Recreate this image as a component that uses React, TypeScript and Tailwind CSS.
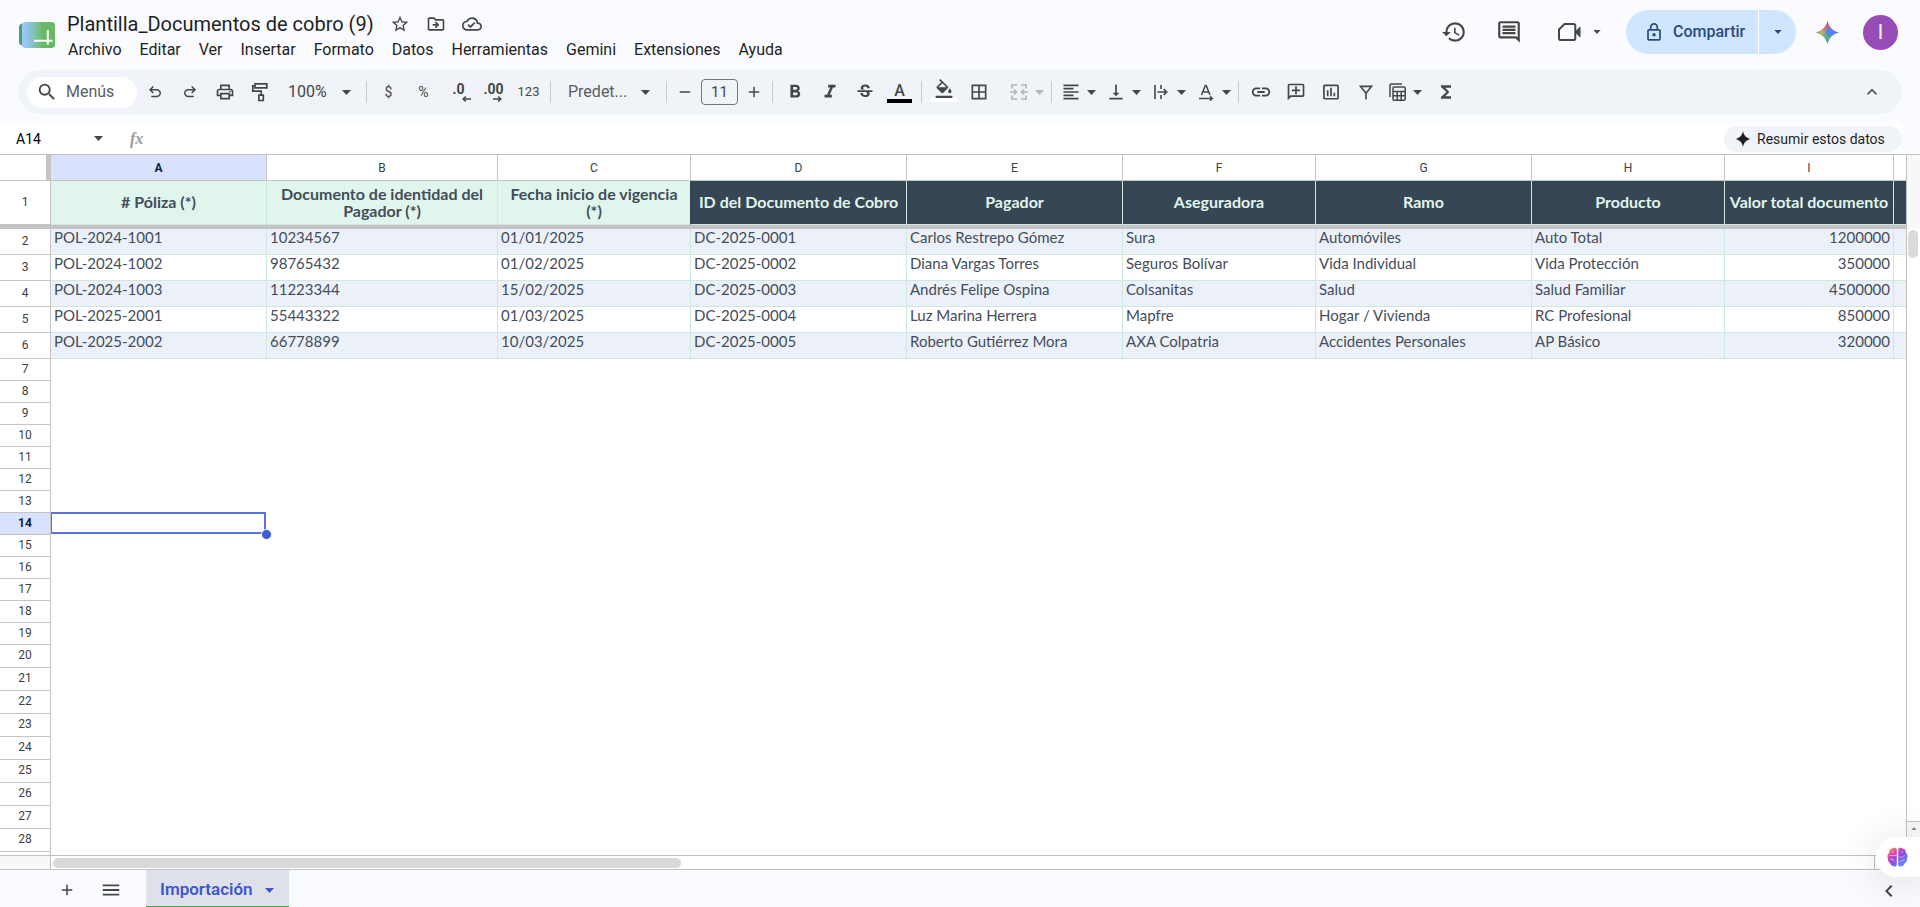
import React from "react";
import {
  MdStarBorder,
  MdOutlineDriveFileMove,
  MdOutlineCloudDone,
  MdSearch,
  MdOutlinePrint,
  MdFormatBold,
  MdFormatItalic,
  MdStrikethroughS,
  MdFormatColorFill,
  MdBorderAll,
  MdFormatAlignLeft,
  MdVerticalAlignBottom,
  MdLink,
  MdOutlineAddComment,
  MdInsertChartOutlined,
  MdFunctions,
  MdHistory,
  MdOutlineComment,
  MdKeyboardArrowUp,
  MdKeyboardArrowLeft,
  MdRemove,
  MdAdd,
  MdMenu,
} from "react-icons/md";

function Caret({ className = "h-[5px] w-[9px]" }: { className?: string }) {
  return (
    <svg className={`shrink-0 ${className}`} viewBox="0 0 9 5" fill="currentColor" aria-hidden="true">
      <path d="M0 0h9L4.5 5z" />
    </svg>
  );
}

function SheetLogo() {
  return (
    <svg className="h-[26px] w-[36px]" viewBox="0 0 36 26" aria-hidden="true">
      <defs>
        <linearGradient id="logoFill" x1="0" x2="1" y1="0" y2="0">
          <stop offset="0" stopColor="#9cc8fb" />
          <stop offset="0.15" stopColor="#94c5f0" />
          <stop offset="0.65" stopColor="#68b964" />
          <stop offset="1" stopColor="#68b964" />
        </linearGradient>
      </defs>
      <path d="M4 1.5h6v22H4a4 4 0 0 1-4-4v-14a4 4 0 0 1 4-4z" fill="#4f9f5e" />
      <rect x="3" y="0" width="33" height="26" rx="3.5" fill="url(#logoFill)" />
      <path d="M15 18.7h18.5M28.8 8v14.500" stroke="#fff" strokeWidth="2" fill="none" />
    </svg>
  );
}

function UndoIcon() {
  return (
    <svg className="size-[18px]" viewBox="0 -960 960 960" fill="currentColor" aria-hidden="true">
      <path d="M280-200v-80h284q63 0 109.500-40T720-420q0-60-46.500-100T564-560H312l104 104-56 56-200-200 200-200 56 56-104 104h252q97 0 166.500 63T800-420q0 94-69.500 157T564-200H280Z" />
    </svg>
  );
}

function RedoIcon() {
  return (
    <svg className="size-[18px]" viewBox="0 -960 960 960" fill="currentColor" aria-hidden="true">
      <path d="M396-200q-97 0-166.500-63T160-420q0-94 69.500-157T396-640h252L544-744l56-56 200 200-200 200-56-56 104-104H396q-63 0-109.500 40T240-420q0 60 46.500 100T396-280h284v80H396Z" />
    </svg>
  );
}

function PaintIcon() {
  return (
    <svg className="h-5 w-[18px]" viewBox="0 0 18 20" fill="none" stroke="currentColor" strokeWidth="1.700" aria-hidden="true">
      <path d="M4 1.900h11.800v4H4zM4 3.900H1.800v5.300h8.400v4M7.900 13.200h4.400v5.300H7.900z" />
    </svg>
  );
}

function DecimalIcon({ digits, direction }: { digits: string; direction: "left" | "right" }) {
  return (
    <span className="flex flex-col items-center text-sm leading-[13px] font-bold">
      <span>{digits}</span>
      <svg
        className={direction === "left" ? "h-[6px] w-[9px] self-end translate-x-[6px]" : "h-[6px] w-[9px] translate-x-[4px]"}
        viewBox="0 0 9 6"
        fill="none"
        stroke="currentColor"
        strokeWidth="1.500"
        aria-hidden="true"
      >
        {direction === "left" ? <path d="M9 3H1.200M3.800.5 1.200 3l2.600 2.500" /> : <path d="M0 3h7.800M5.200.5 7.800 3 5.200 5.500" />}
      </svg>
    </span>
  );
}

function MergeIcon() {
  return (
    <svg className="h-[18px] w-[18px]" viewBox="0 0 18 18" fill="none" stroke="currentColor" strokeWidth="1.700" aria-hidden="true">
      <path d="M7 2H2v3.500M7 16H2v-3.500M11 2h5v3.500M11 16h5v-3.500M0 9h6.200M4 6.500 6.500 9 4 11.500M18 9h-6.200M14 6.500 11.500 9l2.500 2.500" />
    </svg>
  );
}

function WrapIcon() {
  return (
    <svg className="h-4 w-[14px]" viewBox="0 0 14 16" fill="none" stroke="currentColor" strokeWidth="1.600" aria-hidden="true">
      <path d="M1 1v14M7 1v4M7 11v4M3.500 8h9M9.700 5l3 3-3 3" />
    </svg>
  );
}

function RotateTextIcon() {
  return (
    <svg className="h-[17px] w-[15px]" viewBox="0 0 15 17" fill="none" stroke="currentColor" strokeWidth="1.500" aria-hidden="true">
      <path d="M2.500 11 6.300 1.500h.9L11 11M3.800 8h6M0 14.500h13M11 12.300l2.300 2.200-2.300 2.200" />
    </svg>
  );
}

function FilterIcon() {
  return (
    <svg className="h-[15px] w-[14px]" viewBox="0 0 14 15" fill="none" stroke="currentColor" strokeWidth="1.600" aria-hidden="true">
      <path d="M1.500 1.400h11L7 8.200zM7 7.500v7" />
    </svg>
  );
}

function TableViewIcon() {
  return (
    <svg className="h-[18px] w-[17px]" viewBox="0 0 17 18" fill="none" stroke="currentColor" strokeWidth="1.500" aria-hidden="true">
      <path d="M13 1H2.500A1.500 1.500 0 0 0 1 2.500V14" />
      <rect x="4" y="4" width="12.200" height="13.200" rx="1.200" />
      <path d="M4 8.500h12M4 12.800h12M8.200 8.500V17M12.200 8.500V17" />
    </svg>
  );
}

function VideoIcon() {
  return (
    <svg className="h-[18px] w-[23px]" viewBox="0 0 23 18" aria-hidden="true">
      <path d="M6.500 1h9A1.800 1.800 0 0 1 17.300 2.800v12.400a1.800 1.800 0 0 1-1.800 1.800H2.800A1.800 1.800 0 0 1 1 15.200V6.500z" fill="none" stroke="currentColor" strokeWidth="2" />
      <path d="M17.500 8 22.500 3.200v11.600L17.500 10z" fill="currentColor" />
    </svg>
  );
}

function LockIcon() {
  return (
    <svg className="h-[18px] w-[14px]" viewBox="0 0 14 18" aria-hidden="true">
      <rect x="1" y="6.800" width="12" height="10" rx="1" fill="none" stroke="currentColor" strokeWidth="1.700" />
      <path d="M3.700 6.500V4.200a3.300 3.300 0 0 1 6.600 0v2.300" fill="none" stroke="currentColor" strokeWidth="1.700" />
      <circle cx="7" cy="11.700" r="1.700" fill="currentColor" />
    </svg>
  );
}

function GeminiIcon() {
  const star = "M11 0c1.400 6 5 9.600 11 11-6 1.400-9.600 5-11 11-1.400-6-5-9.600-11-11C6 9.600 9.600 6 11 0z";
  return (
    <svg className="size-[23px]" viewBox="0 0 22 22" aria-hidden="true">
      <defs>
        <linearGradient id="gemYellow" x1="0" y1="0.5" x2="0.5" y2="0.5">
          <stop offset="0" stopColor="#f2c233" />
          <stop offset="0.5" stopColor="#dcc04c" />
          <stop offset="1" stopColor="#dcc04c" stopOpacity="0" />
        </linearGradient>
        <linearGradient id="gemRed" x1="0.45" y1="0" x2="0.58" y2="0.42">
          <stop offset="0" stopColor="#e5483f" />
          <stop offset="0.45" stopColor="#d9625f" />
          <stop offset="1" stopColor="#d9625f" stopOpacity="0" />
        </linearGradient>
        <linearGradient id="gemGreen" x1="0.45" y1="1" x2="0.58" y2="0.55">
          <stop offset="0" stopColor="#46a85c" />
          <stop offset="0.5" stopColor="#5cb46c" />
          <stop offset="1" stopColor="#5cb46c" stopOpacity="0" />
        </linearGradient>
      </defs>
      <path d={star} fill="#4f82f4" />
      <path d={star} fill="url(#gemYellow)" />
      <path d={star} fill="url(#gemRed)" />
      <path d={star} fill="url(#gemGreen)" />
    </svg>
  );
}

function BrainIcon() {
  return (
    <svg className="h-[20px] w-[21px]" viewBox="0 0 21 20" aria-hidden="true">
      <defs>
        <linearGradient id="brainFill" x1="0.1" y1="0" x2="0.9" y2="1">
          <stop offset="0" stopColor="#f59a2c" />
          <stop offset="0.28" stopColor="#d946b8" />
          <stop offset="0.55" stopColor="#8b4fe0" />
          <stop offset="1" stopColor="#4fa8fb" />
        </linearGradient>
      </defs>
      <path
        d="M9.800 2.200C9.300.3 6 .1 5 1.800 2.800 2 1.800 4 2.300 5.800.4 7-.1 9.800 1 11.500.6 14 2 15.800 3.200 16.300 3.600 19.300 8.500 21 9.800 18zM11.200 2.200C11.700.3 15 .1 16 1.800c2.200.2 3.200 2.200 2.700 4 1.900 1.200 2.400 4 1.300 5.700.4 2.500-1 4.300-2.200 4.800-.4 3-5.300 4.700-6.600 1.700z"
        fill="url(#brainFill)"
      />
      <path
        d="M2.500 8.500h7M3 12.500h3l1.500 2M5 4l2 1.500M18 8l-3 2.500-3-1M17.500 13l-3.500.5-1.500 2M16 4.500l-2 1.500"
        fill="none"
        stroke="#fff"
        strokeOpacity="0.500"
        strokeWidth="0.900"
      />
    </svg>
  );
}

function ToolButton({ label, children, className = "w-[35px]" }: { label: string; children: React.ReactNode; className?: string }) {
  return (
    <button type="button" aria-label={label} className={`flex h-8 shrink-0 items-center justify-center ${className}`}>
      {children}
    </button>
  );
}

function ToolMenu({ label, children, className = "" }: { label: string; children: React.ReactNode; className?: string }) {
  return (
    <button type="button" aria-label={label} className={`flex h-8 w-10 shrink-0 items-center ${className}`}>
      <span className="flex w-6 justify-center">{children}</span>
      <span className="flex w-4 justify-center">
        <Caret />
      </span>
    </button>
  );
}

function Divider() {
  return <span className="mx-1 h-[22px] w-px shrink-0 bg-[#c7c9cc]" />;
}

const menus = ["Archivo", "Editar", "Ver", "Insertar", "Formato", "Datos", "Herramientas", "Gemini", "Extensiones", "Ayuda"];

function Header() {
  return (
    <header className="flex h-[70px] items-start pl-[19px] text-[#444746]">
      <div className="mt-[22px]">
        <SheetLogo />
      </div>
      <div className="ml-1">
        <div className="mt-2 flex h-8 items-center pl-2">
          <h1 className="text-xl text-[#1f1f1f]">Plantilla_Documentos de cobro (9)</h1>
          <div className="ml-4 flex items-center gap-4">
            <button type="button" aria-label="Destacar"><MdStarBorder className="size-5" /></button>
            <button type="button" aria-label="Mover"><MdOutlineDriveFileMove className="size-5" /></button>
            <button type="button" aria-label="Estado del documento"><MdOutlineCloudDone className="size-5" /></button>
          </div>
        </div>
        <nav className="flex h-5 items-center text-base leading-5 text-[#1f1f1f]">
          {menus.map((m) => (
            <button key={m} type="button" className="px-[9px]">{m}</button>
          ))}
        </nav>
      </div>
      <div className="ml-auto flex h-16 items-center pr-[22px]">
        <button type="button" aria-label="Historial de versiones"><MdHistory className="size-[26px]" /></button>
        <button type="button" aria-label="Comentarios" className="ml-[29px]"><MdOutlineComment className="size-[26px]" /></button>
        <button type="button" aria-label="Videollamada" className="ml-9 flex items-center gap-3">
          <VideoIcon />
          <Caret className="h-[4px] w-2" />
        </button>
        <div className="ml-[25px] flex h-11 overflow-hidden rounded-full bg-[#d0e5fe] font-medium text-[#2c4a7c]">
          <button type="button" className="flex w-[132px] items-center gap-3 pl-[21px] text-base">
            <LockIcon />
            Compartir
          </button>
          <button type="button" aria-label="Opciones para compartir" className="flex w-[38px] items-center justify-center border-l border-white">
            <Caret className="h-[4px] w-2" />
          </button>
        </div>
        <button type="button" aria-label="Gemini" className="ml-5"><GeminiIcon /></button>
        <button type="button" aria-label="Cuenta" className="ml-6 flex size-[35px] items-center justify-center rounded-full bg-[#974db5] text-xl text-white">I</button>
      </div>
    </header>
  );
}

function Toolbar() {
  return (
    <div role="toolbar" aria-label="Herramientas" className="mr-[18px] ml-[18px] flex h-11 items-center rounded-full bg-[#f0f3f8] pr-[13px] pl-[9px] text-[#444746]">
      <label className="flex h-[31px] w-[110px] shrink-0 items-center gap-2 rounded-full bg-white pl-[9px]">
        <MdSearch className="size-[22px] shrink-0" />
        <input aria-label="Menús" placeholder="Menús" className="w-[62px] bg-transparent text-base outline-none placeholder:text-[#5a5d60]" />
      </label>
      <div className="flex">
        <ToolButton label="Deshacer"><UndoIcon /></ToolButton>
        <ToolButton label="Rehacer"><RedoIcon /></ToolButton>
        <ToolButton label="Imprimir"><MdOutlinePrint className="size-5" /></ToolButton>
        <ToolButton label="Copiar formato"><PaintIcon /></ToolButton>
      </div>
      <span className="relative ml-1.5 flex w-[79px] shrink-0 items-center">
        <select aria-label="Zoom" className="w-full appearance-none bg-transparent pl-[5px] text-base outline-none">
          <option>100%</option>
        </select>
        <Caret className="pointer-events-none absolute right-[11px] h-[5px] w-[9px]" />
      </span>
      <Divider />
      <ToolButton label="Moneda" className="w-[35px] text-sm">$</ToolButton>
      <ToolButton label="Porcentaje" className="w-[35px] text-sm">%</ToolButton>
      <ToolButton label="Menos decimales"><DecimalIcon digits=".0" direction="left" /></ToolButton>
      <ToolButton label="Más decimales"><DecimalIcon digits=".00" direction="right" /></ToolButton>
      <ToolButton label="Más formatos" className="w-[35px] text-[13px]">123</ToolButton>
      <Divider />
      <span className="relative flex w-[107px] shrink-0 items-center">
        <select aria-label="Fuente" className="w-full appearance-none bg-transparent pl-[13px] text-base text-[#5a5d60] outline-none">
          <option>Predet...</option>
        </select>
        <Caret className="pointer-events-none absolute right-3 h-[5px] w-[9px]" />
      </span>
      <Divider />
      <ToolButton label="Reducir tamaño" className="mr-[2px] w-7"><MdRemove className="size-[18px]" /></ToolButton>
      <input aria-label="Tamaño de fuente" defaultValue="11" className="h-[26px] w-[37px] shrink-0 rounded border border-[#747775] bg-transparent text-center text-[15px] outline-none" />
      <ToolButton label="Aumentar tamaño" className="ml-[2px] w-7"><MdAdd className="size-[18px]" /></ToolButton>
      <Divider />
      <ToolButton label="Negrita"><MdFormatBold className="size-[22px]" /></ToolButton>
      <ToolButton label="Cursiva"><MdFormatItalic className="size-[22px]" /></ToolButton>
      <ToolButton label="Tachado"><MdStrikethroughS className="size-5" /></ToolButton>
      <ToolButton label="Color del texto" className="w-[35px] flex-col">
        <span className="text-base leading-[17px] font-medium">A</span>
        <span className="h-1 w-[25px] bg-black" />
      </ToolButton>
      <Divider />
      <ToolButton label="Color de relleno" className="w-[35px] flex-col">
        <MdFormatColorFill className="-mb-[1px] size-5" />
        <span className="mb-[3px] h-1 w-[26px] bg-white" />
      </ToolButton>
      <ToolButton label="Bordes"><MdBorderAll className="size-5" /></ToolButton>
      <div className="ml-[11px] flex">
        <ToolMenu label="Combinar celdas" className="text-[#b3b6b9]"><MergeIcon /></ToolMenu>
      </div>
      <Divider />
      <div className="ml-[3px] flex gap-[5px]">
        <ToolMenu label="Alineación horizontal"><MdFormatAlignLeft className="size-5" /></ToolMenu>
        <ToolMenu label="Alineación vertical"><MdVerticalAlignBottom className="size-5" /></ToolMenu>
        <ToolMenu label="Ajuste de texto"><WrapIcon /></ToolMenu>
        <ToolMenu label="Rotación del texto"><RotateTextIcon /></ToolMenu>
      </div>
      <Divider />
      <ToolButton label="Insertar enlace"><MdLink className="size-[22px]" /></ToolButton>
      <ToolButton label="Insertar comentario"><MdOutlineAddComment className="size-5 -scale-x-100" /></ToolButton>
      <ToolButton label="Insertar gráfico"><MdInsertChartOutlined className="size-5" /></ToolButton>
      <ToolButton label="Crear filtro"><FilterIcon /></ToolButton>
      <ToolMenu label="Vistas de tabla" className="ml-[2px]"><TableViewIcon /></ToolMenu>
      <ToolButton label="Funciones" className="ml-[3px] w-[35px]"><MdFunctions className="size-5" /></ToolButton>
      <ToolButton label="Ocultar menús" className="ml-auto w-[35px]"><MdKeyboardArrowUp className="size-5" /></ToolButton>
    </div>
  );
}

function FormulaBar() {
  return (
    <div className="mt-[9px] mr-[18px] flex h-[31px] shrink-0 items-center bg-white">
      <input aria-label="Cuadro de nombres" defaultValue="A14" className="w-[78px] bg-transparent pl-4 text-sm text-black outline-none" />
      <button type="button" aria-label="Intervalos con nombre" className="ml-4 flex h-6 items-center text-[#444746]">
        <Caret />
      </button>
      <span className="ml-[27px] font-['Liberation_Serif',serif] text-base font-bold text-[#9a9da0] italic">fx</span>
      <input aria-label="Barra de fórmulas" className="min-w-0 flex-1 bg-transparent px-2 text-sm outline-none" />
      <button type="button" className="flex h-[26px] w-[178px] items-center gap-[6px] rounded-full bg-[#f0f3f8] pl-[11px] text-sm text-[#1f1f1f]">
        <svg className="size-4" viewBox="0 0 22 22" aria-hidden="true">
          <path d="M11 0c.9 6.200 4.800 10.100 11 11-6.200.9-10.100 4.800-11 11-.9-6.200-4.800-10.100-11-11C6.200 10.100 10.100 6.200 11 0z" fill="currentColor" />
        </svg>
        Resumir estos datos
      </button>
    </div>
  );
}

const headings: { text: string; dark: boolean }[] = [
  { text: "# Póliza (*)", dark: false },
  { text: "Documento de identidad del Pagador (*)", dark: false },
  { text: "Fecha inicio de vigencia (*)", dark: false },
  { text: "ID del Documento de Cobro", dark: true },
  { text: "Pagador", dark: true },
  { text: "Aseguradora", dark: true },
  { text: "Ramo", dark: true },
  { text: "Producto", dark: true },
  { text: "Valor total documento", dark: true },
  { text: "", dark: true },
];

const rows: string[][] = [
  ["POL-2024-1001", "10234567", "01/01/2025", "DC-2025-0001", "Carlos Restrepo Gómez", "Sura", "Automóviles", "Auto Total", "1200000", ""],
  ["POL-2024-1002", "98765432", "01/02/2025", "DC-2025-0002", "Diana Vargas Torres", "Seguros Bolívar", "Vida Individual", "Vida Protección", "350000", ""],
  ["POL-2024-1003", "11223344", "15/02/2025", "DC-2025-0003", "Andrés Felipe Ospina", "Colsanitas", "Salud", "Salud Familiar", "4500000", ""],
  ["POL-2025-2001", "55443322", "01/03/2025", "DC-2025-0004", "Luz Marina Herrera", "Mapfre", "Hogar / Vivienda", "RC Profesional", "850000", ""],
  ["POL-2025-2002", "66778899", "10/03/2025", "DC-2025-0005", "Roberto Gutiérrez Mora", "AXA Colpatria", "Accidentes Personales", "AP Básico", "320000", ""],
];

const emptyRows = Array.from({ length: 23 }, (_, i) => i + 7);
const letters = ["A", "B", "C", "D", "E", "F", "G", "H", "I", ""];
const rowHead = "border-r border-b border-[#c4c4c4] px-0 pt-0 pb-[2px] text-center align-middle text-xs leading-4 font-[Roboto,sans-serif]";

function Grid() {
  return (
    <div className="min-w-0 flex-1 overflow-hidden border-r border-[#c0c0c0]">
      <table className="w-full table-fixed border-separate border-spacing-0">
        <colgroup>
          <col className="w-[51px]" />
          <col className="w-[216px]" />
          <col className="w-[231px]" />
          <col className="w-[193px]" />
          <col className="w-[216px]" />
          <col className="w-[216px]" />
          <col className="w-[193px]" />
          <col className="w-[216px]" />
          <col className="w-[193px]" />
          <col className="w-[169px]" />
          <col />
        </colgroup>
        <thead>
          <tr className="h-[26px]">
            <td className="border-r-[5px] border-b border-[#c4c4c4] p-0" />
            {letters.map((l, i) => (
              <th
                key={i}
                scope="col"
                className={`border-b border-[#c4c4c4] p-0 text-xs leading-4 ${i < 9 ? "border-r" : ""} ${
                  i === 0 ? "bg-[#d8e2fc] font-bold text-[#0b1d4d]" : "font-normal text-[#3c4043]"
                }`}
              >
                {l}
              </th>
            ))}
          </tr>
        </thead>
        <tbody className="font-[Lato,sans-serif] text-[15px] text-[#434d5b]">
          <tr className="h-11">
            <th scope="row" className={`${rowHead} font-normal text-[#3c4043]`}>1</th>
            {headings.map((h, i) => (
              <td
                key={i}
                className={`border-b border-[#cbe9de] px-[3px] pt-0 pb-[2px] text-center align-middle text-base leading-[17px] font-bold ${i < 9 ? "border-r" : ""} ${
                  h.dark ? "bg-[#374655] text-[#e0f5ec]" : "bg-[#e0f5ec]"
                } ${i === 2 ? "border-r-[#374655]" : ""}`}
              >
                {h.text}
              </td>
            ))}
          </tr>
          <tr className="h-1" aria-hidden="true">
            <td colSpan={11} className="bg-[#c4c4c4] p-0" />
          </tr>
          {rows.map((r, ri) => (
            <tr key={ri} className={`h-[26px] ${ri % 2 === 0 ? "bg-[#ecf1f9]" : "bg-white"}`}>
              <th scope="row" className={`${rowHead} bg-white font-normal text-[#3c4043]`}>{ri + 2}</th>
              {r.map((c, i) => (
                <td
                  key={i}
                  className={`border-b border-[#cbe9de] px-[3px] py-0 align-top leading-[17px] whitespace-nowrap ${i < 9 ? "border-r" : ""} ${
                    i === 8 ? "text-right" : "text-left"
                  }`}
                >
                  {c}
                </td>
              ))}
            </tr>
          ))}
          {emptyRows.map((n) => (
            <tr key={n} className={n < 20 ? "h-[22px]" : "h-[23px]"}>
              <th
                scope="row"
                className={`${rowHead} ${n === 14 ? "bg-[#d8e2fc] font-bold text-[#0b1d4d]" : "font-normal text-[#3c4043]"}`}
              >
                {n < 29 ? n : ""}
              </th>
              {n === 14 ? (
                <>
                  <td className="relative p-0">
                    <span className="absolute -top-px right-px bottom-px left-0 border-2 border-l border-[#5673e0]" />
                    <span className="absolute -right-[5px] -bottom-[5px] size-[11px] rounded-full border border-white bg-[#3f5bd1]" />
                  </td>
                  <td colSpan={9} className="p-0" />
                </>
              ) : (
                <td colSpan={10} className="p-0" />
              )}
            </tr>
          ))}
        </tbody>
      </table>
    </div>
  );
}

function SideScroll() {
  return (
    <div className="flex w-[13px] shrink-0 flex-col">
      <div className="h-[74px] bg-[#f8f8f8]" />
      <div className="mt-px ml-px h-7 w-[10px] rounded-full bg-[#dadada]" />
      <div className="mt-auto flex h-[34px] justify-center border-t border-[#c0c0c0] bg-[#f8f8f8] pt-[5px] text-[#8a8a8a]">
        <Caret className="h-[3px] w-[6px] rotate-180" />
      </div>
    </div>
  );
}

function BottomScroll() {
  return (
    <div className="flex h-[15px] shrink-0 border-y border-[#c0c0c0]">
      <div className="w-[51px] border-r border-[#c0c0c0] bg-[#f8f8f8]" />
      <div className="flex flex-1 items-center pl-[2px]">
        <div className="h-[10px] w-[34.5%] rounded-full bg-[#d9d9d9]" />
      </div>
      <div className="w-[46px] border-l border-[#c0c0c0]" />
    </div>
  );
}

function SheetTabs() {
  return (
    <footer className="flex h-[37px] shrink-0 items-stretch pr-[19px] pl-[55px] text-[#444746]">
      <button type="button" aria-label="Añadir hoja" className="flex w-6 items-center justify-center pt-[2px]"><MdAdd className="size-[18px]" /></button>
      <button type="button" aria-label="Todas las hojas" className="ml-5 flex w-6 items-center justify-center pt-[2px]"><MdMenu className="size-[22px]" /></button>
      <button type="button" className="ml-[23px] flex w-[143px] items-center gap-3 border-b border-[#4ea04a] bg-[#dfe1ea] pt-1 pl-[14px] text-[17px] font-semibold text-[#3f57cc]">
        Importación
        <Caret />
      </button>
      <button type="button" aria-label="Mostrar panel lateral" className="ml-auto pt-1"><MdKeyboardArrowLeft className="size-6" /></button>
    </footer>
  );
}

export default function App() {
  return (
    <div className="relative flex h-screen flex-col overflow-hidden bg-[#f9fbff] font-[Roboto,sans-serif]">
      <Header />
      <Toolbar />
      <FormulaBar />
      <main className="flex min-h-0 flex-1 border-t border-[#c0c0c0] bg-white">
        <Grid />
        <SideScroll />
      </main>
      <div className="bg-white">
        <BottomScroll />
      </div>
      <SheetTabs />
      <button
        type="button"
        aria-label="Asistente"
        className="absolute right-0 bottom-[30px] flex h-10 w-11 items-center rounded-l-full bg-white pl-[11px] shadow-[0_4px_40px_rgba(0,0,0,0.14)]"
      >
        <BrainIcon />
      </button>
    </div>
  );
}
